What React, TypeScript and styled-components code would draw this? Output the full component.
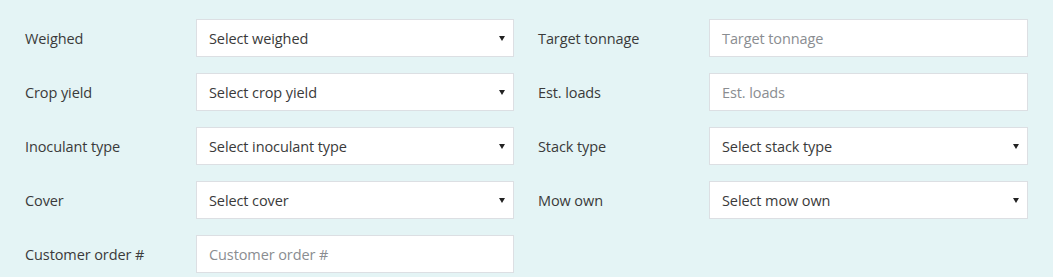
import React from "react";
import styled, { createGlobalStyle } from "styled-components";

const Global = createGlobalStyle`
  html, body { margin: 0; padding: 0; background: #e4f4f5; }
  body { font-family: "Open Sans", "Noto Sans", sans-serif; }
`;

const Page = styled.div`
  background: #e4f4f5;
  min-height: 277px;
  padding: 19px 25px 0 25px;
  box-sizing: border-box;
`;

const Grid = styled.div`
  display: grid;
  grid-template-columns: 171px 318px 195px 319px;
  row-gap: 16px;
`;

const Label = styled.div<{ $right?: boolean }>`
  display: flex;
  align-items: center;
  height: 38px;
  padding-left: ${(p) => (p.$right ? "24px" : "0")};
  font-size: 14.5px;
  color: #3a3a3a;
  letter-spacing: -0.1px;
`;

const Box = styled.div<{ $placeholder?: boolean }>`
  position: relative;
  display: flex;
  align-items: center;
  height: 38px;
  box-sizing: border-box;
  border: 1px solid #dcdfe3;
  background: #fff;
  padding: 0 12px;
  font-size: 14.5px;
  letter-spacing: -0.1px;
  color: ${(p) => (p.$placeholder ? "#8a8d91" : "#3a3a3a")};
`;

const Arrow = styled.span`
  position: absolute;
  right: 8px;
  top: 50%;
  margin-top: -2px;
  width: 0;
  height: 0;
  border-left: 3px solid transparent;
  border-right: 3px solid transparent;
  border-top: 5px solid #222;
`;

const Empty = styled.div``;

type Field = { label: string; text: string; select: boolean };

const rows: [Field, Field | null][] = [
  [
    { label: "Weighed", text: "Select weighed", select: true },
    { label: "Target tonnage", text: "Target tonnage", select: false },
  ],
  [
    { label: "Crop yield", text: "Select crop yield", select: true },
    { label: "Est. loads", text: "Est. loads", select: false },
  ],
  [
    { label: "Inoculant type", text: "Select inoculant type", select: true },
    { label: "Stack type", text: "Select stack type", select: true },
  ],
  [
    { label: "Cover", text: "Select cover", select: true },
    { label: "Mow own", text: "Select mow own", select: true },
  ],
  [{ label: "Customer order #", text: "Customer order #", select: false }, null],
];

const FieldBox = ({ f }: { f: Field }) => (
  <Box $placeholder={!f.select}>
    {f.text}
    {f.select && <Arrow />}
  </Box>
);

export default function App() {
  return (
    <Page>
      <Global />
      <Grid>
        {rows.map(([a, b], i) => (
          <React.Fragment key={i}>
            <Label>{a.label}</Label>
            <FieldBox f={a} />
            {b ? (
              <>
                <Label $right>{b.label}</Label>
                <FieldBox f={b} />
              </>
            ) : (
              <>
                <Empty />
                <Empty />
              </>
            )}
          </React.Fragment>
        ))}
      </Grid>
    </Page>
  );
}
